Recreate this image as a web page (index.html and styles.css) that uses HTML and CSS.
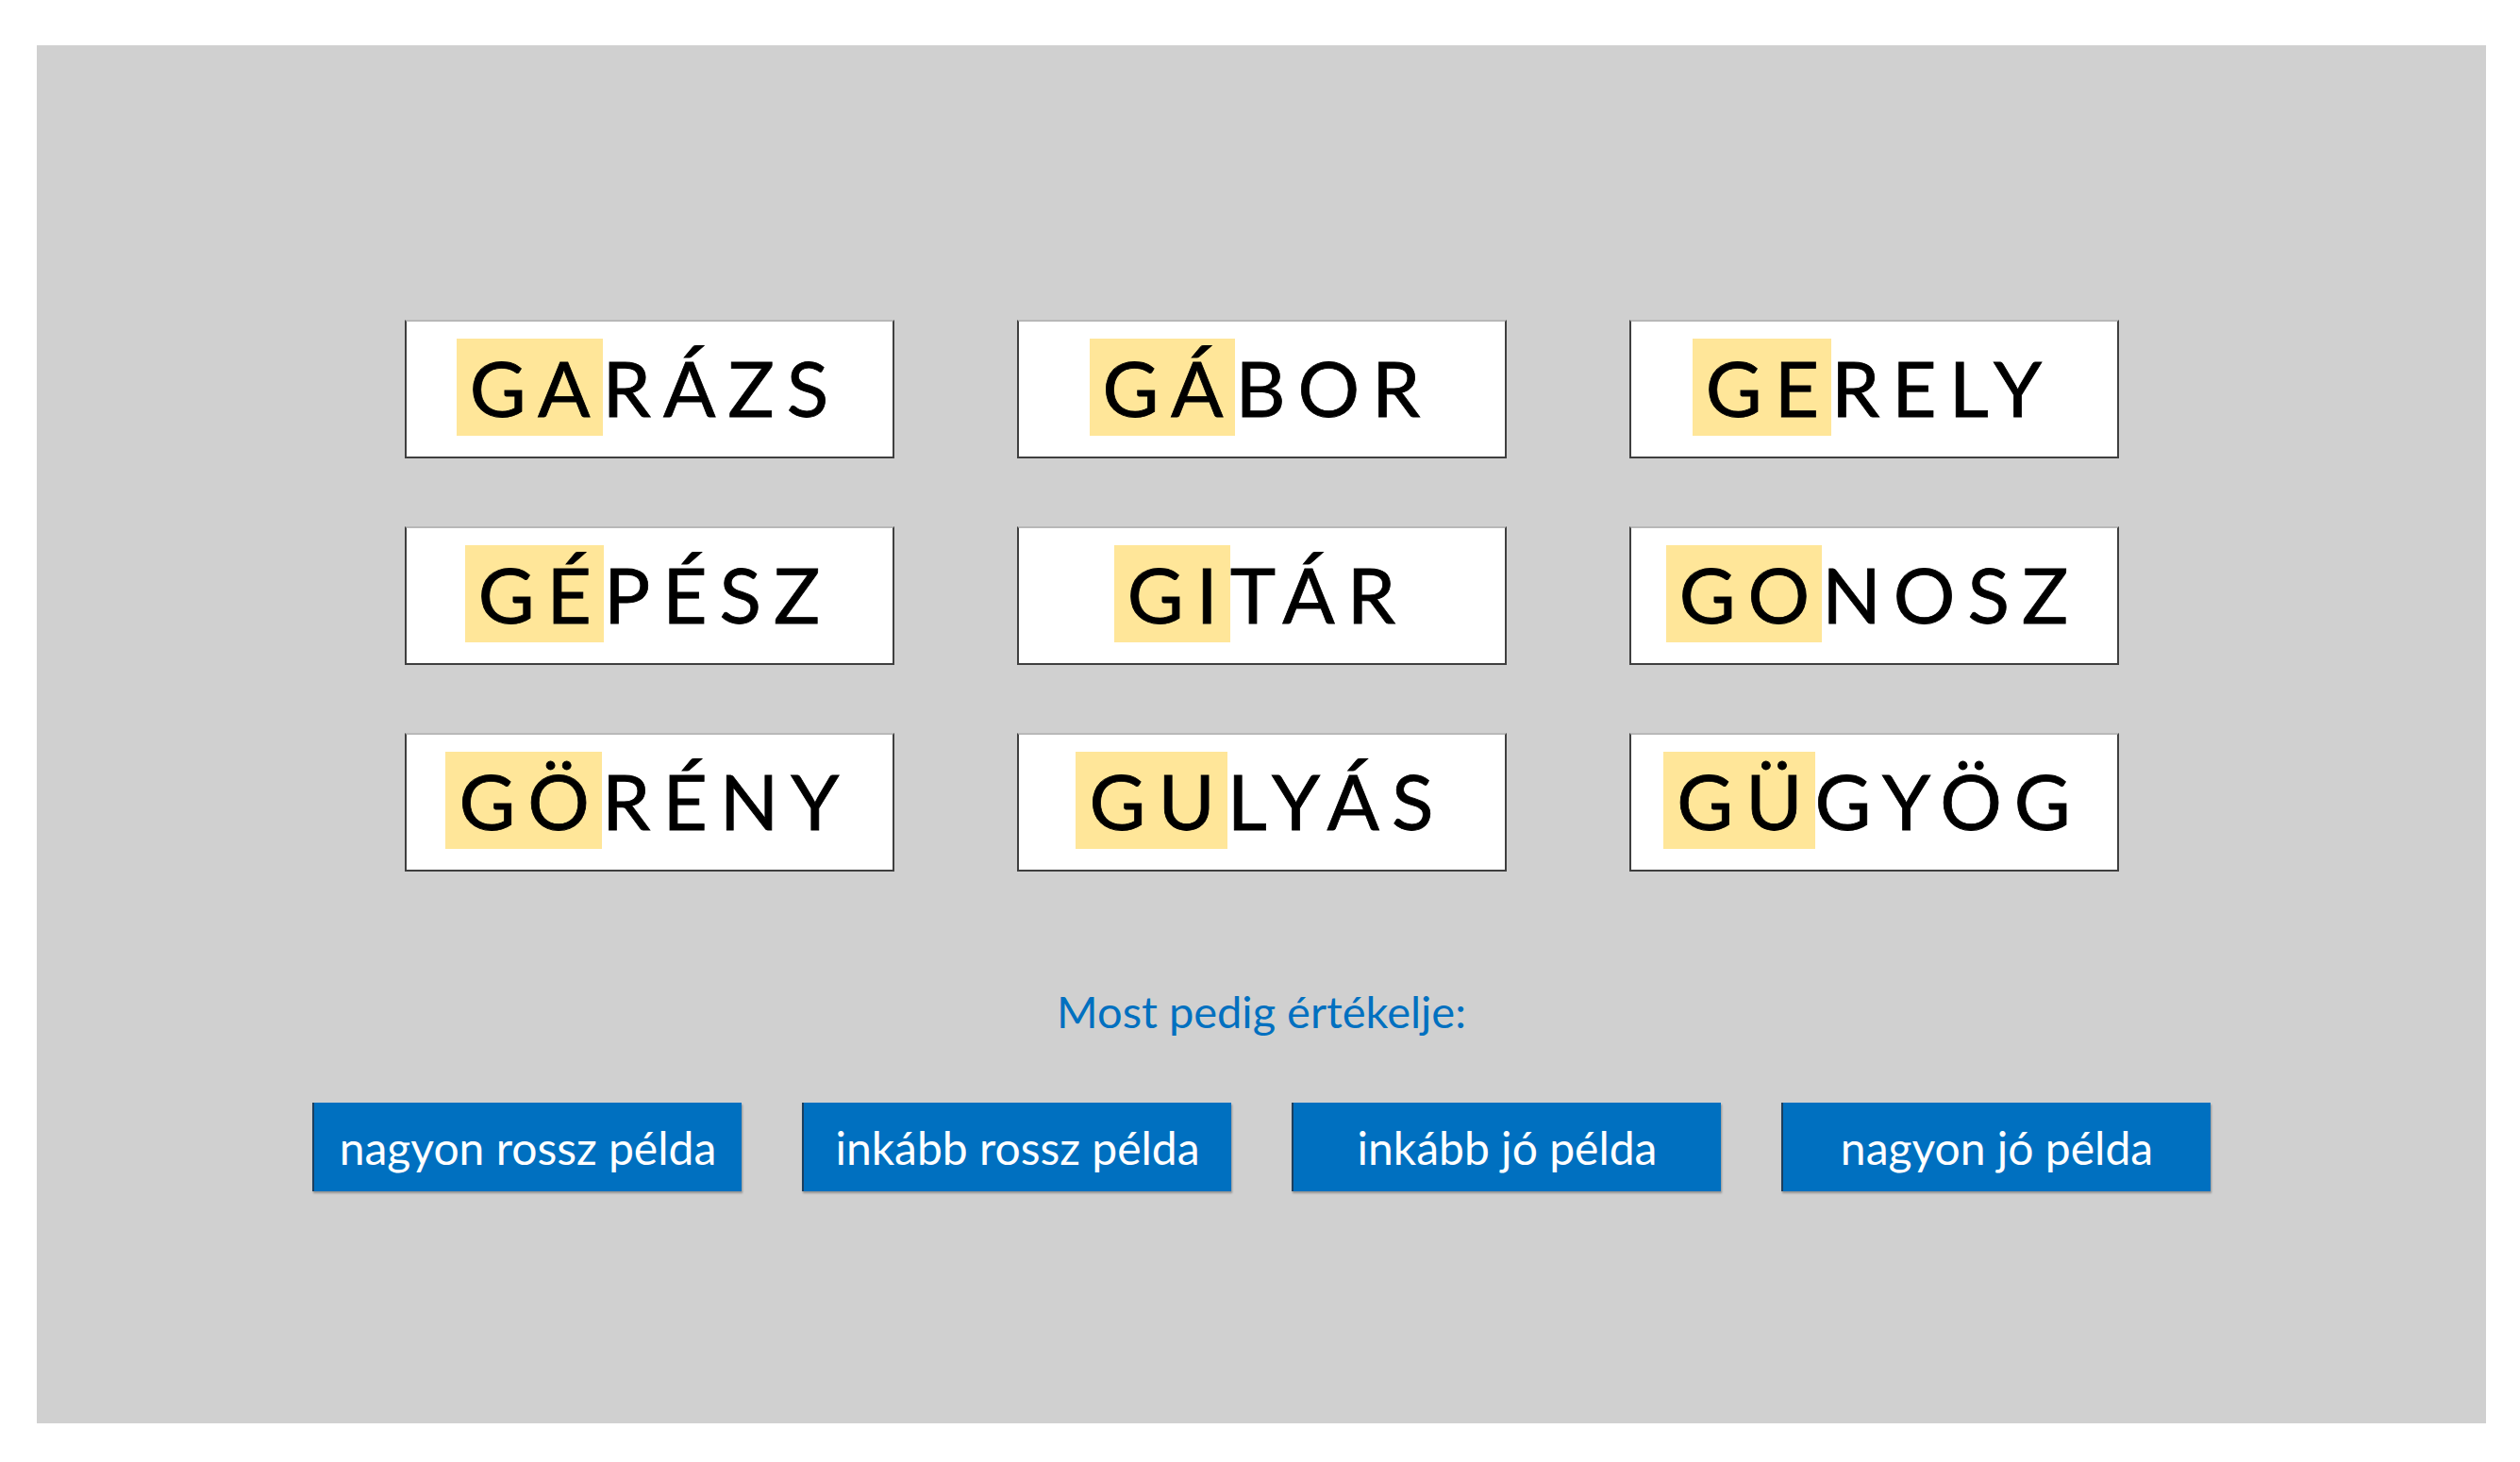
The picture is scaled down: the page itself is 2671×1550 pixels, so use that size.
FILE: index.html
```html
<!DOCTYPE html>
<html lang="hu">
<head>
<meta charset="utf-8">
<title>Értékelés</title>
<link rel="stylesheet" href="styles.css">
</head>
<body>
<div class="slide">
  <div class="words">
    <div class="word"><span class="txt"><span class="hl">GA</span>RÁZS</span></div>
    <div class="word"><span class="txt"><span class="hl">GÁ</span>BOR</span></div>
    <div class="word"><span class="txt"><span class="hl">GE</span>RELY</span></div>
    <div class="word"><span class="txt"><span class="hl">GÉ</span>PÉSZ</span></div>
    <div class="word"><span class="txt"><span class="hl">GI</span>TÁR</span></div>
    <div class="word"><span class="txt"><span class="hl">GO</span>NOSZ</span></div>
    <div class="word"><span class="txt"><span class="hl">GÖ</span>RÉNY</span></div>
    <div class="word"><span class="txt"><span class="hl">GU</span>LYÁS</span></div>
    <div class="word"><span class="txt"><span class="hl">GÜ</span>GYÖG</span></div>
  </div>
  <div class="prompt">Most pedig értékelje:</div>
  <div class="choices">
    <button class="choice">nagyon rossz példa</button>
    <button class="choice">inkább rossz példa</button>
    <button class="choice">inkább jó példa</button>
    <button class="choice">nagyon jó példa</button>
  </div>
</div>
</body>
</html>
```

FILE: styles.css
```css
html, body {
  margin: 0;
  padding: 0;
  background: #ffffff;
}

.slide {
  margin: 48px 0 0 39px;
  width: 2596px;
  height: 1461px;
  box-sizing: border-box;
  padding-top: 291px;
  background: #d0d0d0;
  display: flex;
  flex-direction: column;
  align-items: center;
  font-family: Lato, "Liberation Sans", sans-serif;
}

.words {
  display: grid;
  grid-template-columns: repeat(3, 519px);
  grid-auto-rows: 147px;
  column-gap: 130px;
  row-gap: 72px;
}

.word {
  box-sizing: border-box;
  background: #ffffff;
  border: 2px solid #3f3f3f;
  border-top-color: #b8b8b8;
  display: flex;
  align-items: center;
  justify-content: center;
  padding-bottom: 4px;
}

.txt {
  font-size: 82px;
  line-height: 103px;
  letter-spacing: 13px;
  color: #000000;
  -webkit-text-stroke: 0.8px #000000;
  white-space: nowrap;
  margin-right: -13px;
}

.hl {
  display: inline-block;
  background: #ffe699;
  padding-left: 14px;
  margin-left: -14px;
}

.prompt {
  margin-top: 120px;
  font-size: 47px;
  line-height: 1.2;
  color: #0070c0;
}

.choices {
  margin-top: 69px;
  display: flex;
  gap: 64px;
}

.choice {
  width: 455px;
  height: 94px;
  border: 0;
  border-left: 2px solid #1d3f5e;
  padding: 0;
  background: #0070c0;
  color: #ffffff;
  font-family: Lato, "Liberation Sans", sans-serif;
  font-size: 48px;
  box-shadow: 1px 2px 2px rgba(0, 0, 0, 0.3);
}
```
